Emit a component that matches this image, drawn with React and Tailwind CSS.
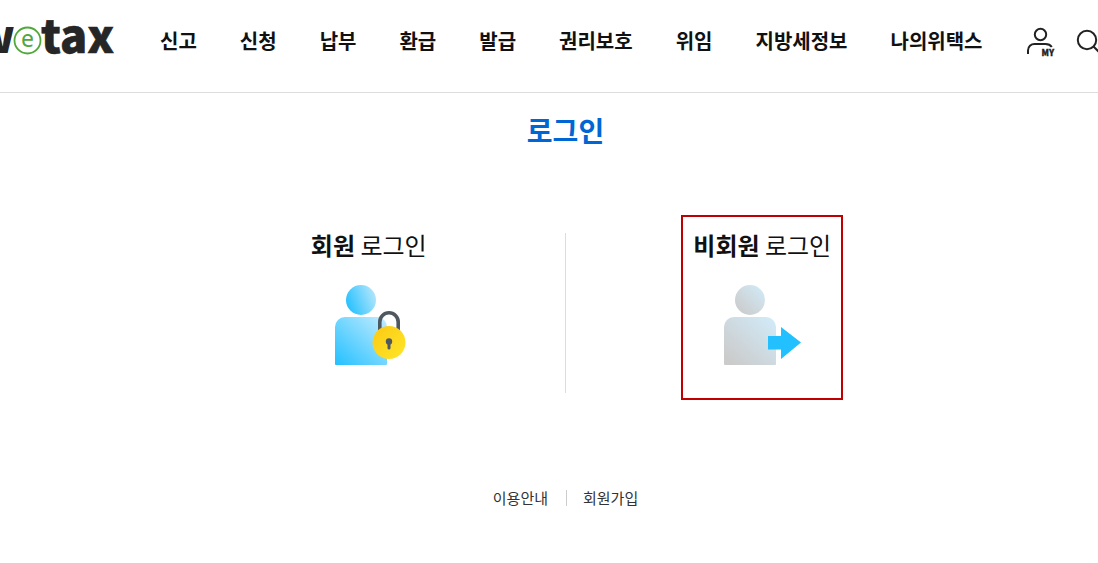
const menus = [
  { path: "#report", label: "신고" },
  { path: "#apply", label: "신청" },
  { path: "#pay", label: "납부" },
  { path: "#refund", label: "환급" },
  { path: "#issue", label: "발급" },
  { path: "#rights", label: "권리보호" },
  { path: "#delegate", label: "위임" },
  { path: "#local-tax", label: "지방세정보" },
  { path: "#my-wetax", label: "나의위택스" },
];

function Logo() {
  return (
    <svg
      viewBox="0 0 116 48"
      className="h-12 w-[116px] shrink-0 font-['Noto_Sans_CJK_KR',sans-serif]"
      role="img"
      aria-label="wetax"
    >
      <text x="15" y="37" textAnchor="end" fontSize="46" fontWeight="900" fill="#262626">
        w
      </text>
      <circle cx="27.500" cy="24.500" r="13" fill="#fff" stroke="#50a83a" strokeWidth="1.800" />
      <text
        x="27.500"
        y="30.500"
        textAnchor="middle"
        fontSize="23"
        fill="#50a83a"
        className="font-['Noto_Sans',sans-serif]"
      >
        e
      </text>
      <text x="41" y="37" fontSize="45" fontWeight="900" fill="#262626" stroke="#262626" strokeWidth="0.600">
        tax
      </text>
    </svg>
  );
}

function MyIcon() {
  return (
    <svg viewBox="0 0 30 32" className="h-8 w-[30px]" fill="none" aria-hidden="true">
      <circle cx="14.500" cy="8.500" r="5.700" stroke="#222" strokeWidth="2" />
      <path
        d="M2 28v-3.500c0-4 3-6.500 6.500-6.500h11c2.800 0 5 1 6.300 3"
        stroke="#222"
        strokeWidth="2"
      />
      <text
        x="15.500"
        y="30"
        fontSize="8.500"
        fontWeight="900"
        fill="#222"
        stroke="#222"
        strokeWidth="0.300"
        className="font-['Noto_Sans_CJK_KR',sans-serif]"
      >
        MY
      </text>
    </svg>
  );
}

function SearchIcon() {
  return (
    <svg viewBox="0 0 22 32" className="h-8 w-[22px]" fill="none" aria-hidden="true">
      <circle cx="11" cy="14" r="9.200" stroke="#222" strokeWidth="2" />
      <path d="M17.500 20.500l7 7" stroke="#222" strokeWidth="2" />
    </svg>
  );
}

function MemberIcon() {
  return (
    <svg viewBox="-4 0 75 80" className="h-20 w-[75px]" aria-hidden="true">
      <defs>
        <linearGradient id="member" x1="0" y1="1" x2="1" y2="0">
          <stop offset="0" stopColor="#22c0ff" />
          <stop offset="1" stopColor="#c4ecff" />
        </linearGradient>
        <linearGradient id="memberHead" x1="0" y1="0.700" x2="1" y2="0.300">
          <stop offset="0" stopColor="#22c0ff" />
          <stop offset="1" stopColor="#b4e6fb" />
        </linearGradient>
        <linearGradient id="lock" x1="0" y1="0" x2="1" y2="1">
          <stop offset="0" stopColor="#fbc914" />
          <stop offset="1" stopColor="#ffe629" />
        </linearGradient>
      </defs>
      <circle cx="26" cy="15" r="15" fill="url(#memberHead)" />
      <path d="M0 79V42a10 10 0 0 1 10-10h32a10 10 0 0 1 10 10v37a1 1 0 0 1-1 1H1a1 1 0 0 1-1-1z" fill="url(#member)" />
      <path d="M44.800 48V37a9.200 9.200 0 0 1 18.400 0v11" fill="none" stroke="#4f5860" strokeWidth="3.600" />
      <circle cx="54" cy="57.500" r="16.500" fill="url(#lock)" />
      <circle cx="54" cy="56.500" r="3.200" fill="#4f5860" />
      <path d="M54 57v6" stroke="#4f5860" strokeWidth="3" strokeLinecap="round" />
    </svg>
  );
}

function GuestIcon() {
  return (
    <svg viewBox="0 0 77 80" className="h-20 w-[77px]" aria-hidden="true">
      <defs>
        <linearGradient id="guest" x1="0" y1="1" x2="1" y2="0">
          <stop offset="0.100" stopColor="#cbcbcb" />
          <stop offset="1" stopColor="#d2ecfa" />
        </linearGradient>
      </defs>
      <circle cx="26" cy="15" r="15" fill="url(#guest)" />
      <path d="M0 79V42a10 10 0 0 1 10-10h32a10 10 0 0 1 10 10v37a1 1 0 0 1-1 1H1a1 1 0 0 1-1-1z" fill="url(#guest)" />
      <path d="M44 51h13v-9l20 15.500L57 74v-9.500H44z" fill="#22c0ff" />
    </svg>
  );
}

export default function App() {
  return (
    <div className="min-h-screen overflow-x-hidden bg-white font-['Noto_Sans_CJK_KR',sans-serif] text-[#111]">
      {/* Global menu */}
      <header className="flex items-start border-b border-[#ddd] pt-4 pb-7">
        <a href="#home">
          <Logo />
        </a>
        <nav className="ml-11 flex gap-[43px] pt-[9px] text-xl leading-8 font-bold whitespace-nowrap">
          {menus.map((menu) => (
            <a key={menu.path} href={menu.path}>
              {menu.label}
            </a>
          ))}
        </nav>
        <div className="ml-auto flex gap-5 pt-2.5">
          <button type="button" aria-label="마이페이지">
            <MyIcon />
          </button>
          <button type="button" aria-label="검색">
            <SearchIcon />
          </button>
        </div>
      </header>

      <main className="pl-[33px]">
        <h1 className="pt-4 text-center text-[28px] leading-[42px] font-bold text-[#0066d4]">로그인</h1>

        {/* Login type */}
        <div className="mx-auto mt-16 flex max-w-[786px] items-center">
          <div className="flex flex-1 justify-center">
            <a href="#member" className="flex flex-col items-center border-2 border-transparent px-2.5 pt-2.5 pb-[33px]">
              <span className="text-2xl leading-9">
                <strong>회원</strong> 로그인
              </span>
              <span className="mt-[22px]">
                <MemberIcon />
              </span>
            </a>
          </div>
          <div className="mt-2.5 h-40 w-px bg-[#ddd]" />
          <div className="flex flex-1 justify-center">
            <a href="#guest" className="flex flex-col items-center border-2 border-[#c00000] px-2.5 pt-2.5 pb-[33px]">
              <span className="text-2xl leading-9">
                <strong>비회원</strong> 로그인
              </span>
              <span className="mt-[22px]">
                <GuestIcon />
              </span>
            </a>
          </div>
        </div>

        <div className="mt-[88px] flex items-center justify-center text-[15px] leading-5 text-[#333]">
          <a href="#guide">이용안내</a>
          <span className="mr-4 ml-[18px] h-4 w-px bg-[#ccc]" />
          <a href="#join">회원가입</a>
        </div>
      </main>
    </div>
  );
}
